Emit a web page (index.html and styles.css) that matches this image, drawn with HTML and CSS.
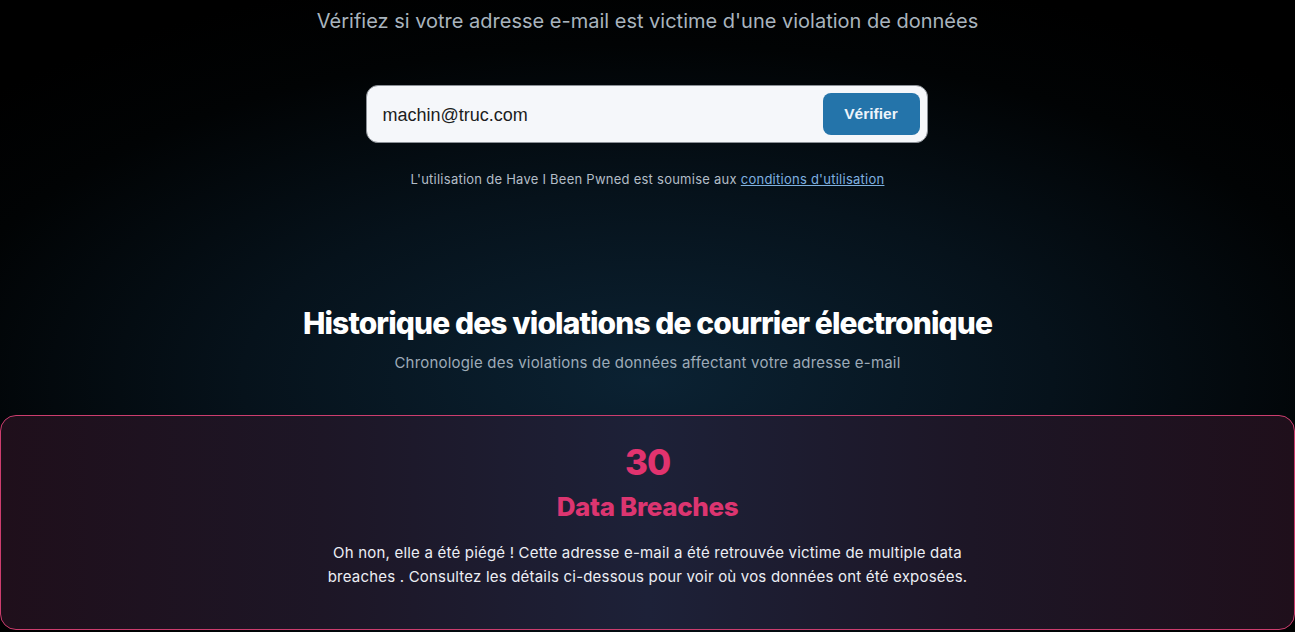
FILE: index.html
```html
<!DOCTYPE html>
<html lang="fr">
<head>
<meta charset="utf-8">
<title>Have I Been Pwned</title>
<link rel="stylesheet" href="styles.css">
</head>
<body>
<main class="page">
  <p class="lead">Vérifiez si votre adresse e-mail est victime d'une violation de données</p>
  <form class="search">
    <span class="search-value">machin@truc.com</span>
    <button type="button" class="search-btn">Vérifier</button>
  </form>
  <p class="terms">L'utilisation de Have I Been Pwned est soumise aux <a href="#">conditions d'utilisation</a></p>

  <section class="history">
    <h1 class="history-title">Historique des violations de courrier électronique</h1>
    <p class="history-sub">Chronologie des violations de données affectant votre adresse e-mail</p>
  </section>

  <section class="card">
    <div class="card-count">30</div>
    <h2 class="card-label">Data Breaches</h2>
    <p class="card-text">Oh non, elle a été piégé ! Cette adresse e-mail a été retrouvée victime de multiple data breaches . Consultez les détails ci-dessous pour voir où vos données ont été exposées.</p>
  </section>
</main>
</body>
</html>
```

FILE: styles.css
```css
* { box-sizing: border-box; }
html, body { margin: 0; padding: 0; }
body {
  background: radial-gradient(ellipse 900px 420px at 50% 380px, #0b2233 0%, #06121b 45%, #010304 80%, #000 100%);
  background-color: #000;
  font-family: Inter, "Noto Sans", sans-serif;
  color: #e8eaf0;
  min-height: 632px;
  overflow: hidden;
}
.page {
  display: flex;
  flex-direction: column;
  align-items: center;
}
.lead {
  margin: 9px 0 0;
  font-size: 20px;
  line-height: 24px;
  color: #a9b4be;
  letter-spacing: 0;
}
.search {
  margin-top: 52px;
  margin-right: 2px;
  width: 562px;
  height: 58px;
  background: #f5f7fa;
  border: 1px solid #8b9096;
  border-radius: 12px;
  display: flex;
  align-items: center;
  justify-content: space-between;
  padding: 0 7px 0 16px;
}
.search-value {
  font-family: "Liberation Sans", Arial, sans-serif;
  font-size: 18px;
  line-height: 22px;
  padding-top: 2px;
  color: #1b1d21;
}
.search-btn {
  width: 97px;
  height: 42px;
  border: 0;
  border-radius: 8px;
  background: #2474aa;
  color: #eef4fb;
  font-family: "Liberation Sans", Arial, sans-serif;
  font-weight: 700;
  font-size: 15.5px;
}
.terms {
  margin: 27px 0 0;
  font-size: 13px;
  line-height: 18px;
  color: #b3bdc7;
  letter-spacing: 0.25px;
}
.terms a {
  color: #7fb1e0;
  text-decoration: underline;
}
.history {
  margin-top: 117px;
  text-align: center;
}
.history-title {
  margin: 0;
  font-size: 30px;
  line-height: 36px;
  font-weight: 800;
  letter-spacing: -0.9px;
  color: #ffffff;
}
.history-sub {
  margin: 12px 0 0;
  font-size: 15px;
  line-height: 20px;
  color: #9eabb8;
  letter-spacing: 0.2px;
}
.card {
  margin-top: 42px;
  width: 100%;
  border: 1px solid #cc3d6e;
  border-radius: 16px;
  background: linear-gradient(90deg, #1f0f1b 0%, #1d1626 25%, #1d2138 50%, #1d1626 75%, #1f0f1b 100%);
  padding: 26px 20px 40px;
  display: flex;
  flex-direction: column;
  align-items: center;
  text-align: center;
}
.card-count {
  font-size: 35px;
  line-height: 40px;
  font-weight: 800;
  color: #e1336f;
  letter-spacing: -1px;
}
.card-label {
  margin: 9px 0 0;
  font-size: 26px;
  line-height: 32px;
  font-weight: 800;
  color: #dc3570;
  letter-spacing: -0.35px;
}
.card-text {
  margin: 18px 0 0;
  max-width: 660px;
  font-size: 15px;
  line-height: 24px;
  color: #eceef4;
  letter-spacing: 0.2px;
}
```
